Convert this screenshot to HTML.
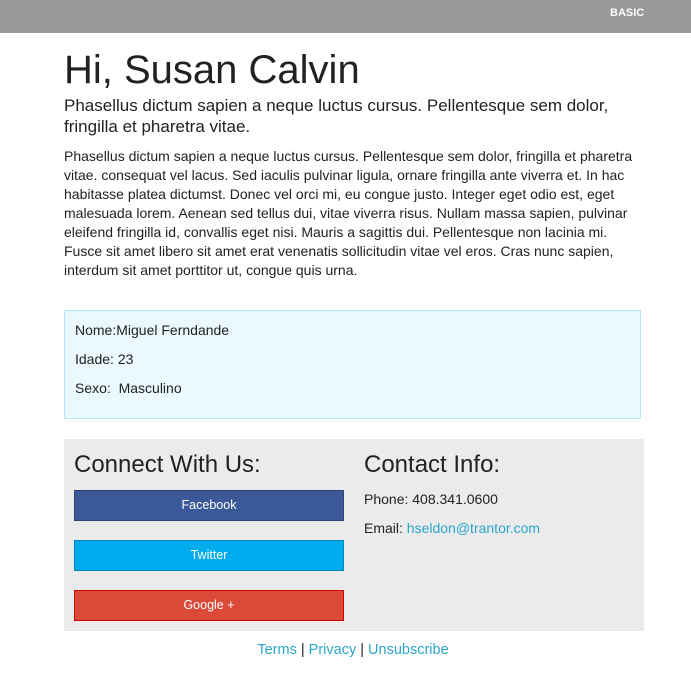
<!DOCTYPE html>
<html><head><meta charset="utf-8"><style>
*{margin:0;padding:0;box-sizing:border-box}
body{width:691px;height:679px;background:#fff;font-family:"Liberation Sans",Arial,sans-serif;color:#222;position:relative;overflow:hidden}
.hdr{position:absolute;left:0;top:0;width:691px;height:33px;background:#999}
.hdr span{position:absolute;left:610px;top:7px;color:#fff;font-weight:bold;font-size:11px}
.abs{position:absolute}
h1{position:absolute;left:64px;top:47px;font-size:40px;font-weight:normal;line-height:46px}
.sub{left:64px;top:95px;width:590px;font-size:17px;line-height:21px}
.p{left:64px;top:147px;width:584px;font-size:14px;line-height:19px}
.box{left:64px;top:310px;width:577px;height:109px;background:#ebf8fe;border:1px solid #b7e6fb}
.box div{position:absolute;left:10px;font-size:14px}
.ft{left:64px;top:439px;width:580px;height:192px;background:#ebebeb}
.ft h3{position:absolute;font-size:24px;font-weight:normal;top:12px}
.btn{position:absolute;left:10px;width:270px;height:31px;color:#fff;font-size:12.5px;text-align:center;line-height:29px}
.ft .t{position:absolute;left:300px;font-size:14px}
a{color:#2ba6cb;text-decoration:none}
.links{left:0;width:706px;top:642px;text-align:center;font-size:14.5px;color:#222}
</style></head><body>
<div class="hdr"><span>BASIC</span></div>
<h1>Hi, Susan Calvin</h1>
<div class="abs sub">Phasellus dictum sapien a neque luctus cursus. Pellentesque sem dolor, fringilla et pharetra vitae.</div>
<div class="abs p">Phasellus dictum sapien a neque luctus cursus. Pellentesque sem dolor, fringilla et pharetra vitae. consequat vel lacus. Sed iaculis pulvinar ligula, ornare fringilla ante viverra et. In hac habitasse platea dictumst. Donec vel orci mi, eu congue justo. Integer eget odio est, eget malesuada lorem. Aenean sed tellus dui, vitae viverra risus. Nullam massa sapien, pulvinar eleifend fringilla id, convallis eget nisi. Mauris a sagittis dui. Pellentesque non lacinia mi. Fusce sit amet libero sit amet erat venenatis sollicitudin vitae vel eros. Cras nunc sapien, interdum sit amet porttitor ut, congue quis urna.</div>
<div class="abs box">
<div style="top:11px">Nome:Miguel Ferndande</div>
<div style="top:40px">Idade: 23</div>
<div style="top:69px">Sexo:&nbsp; Masculino</div>
</div>
<div class="abs ft">
<h3 style="left:10px">Connect With Us:</h3>
<h3 style="left:300px">Contact Info:</h3>
<div class="btn" style="top:51px;background:#3b5998;border:1px solid #2d4473">Facebook</div>
<div class="btn" style="top:101px;background:#00acee;border:1px solid #0087bd">Twitter</div>
<div class="btn" style="top:151px;background:#db4a39;border:1px solid #c00">Google +</div>
<div class="t" style="top:52px">Phone: 408.341.0600</div>
<div class="t" style="top:81px">Email: <a>hseldon@trantor.com</a></div>
</div>
<div class="abs links"><a>Terms</a> | <a>Privacy</a> | <a>Unsubscribe</a></div>
</body></html>
